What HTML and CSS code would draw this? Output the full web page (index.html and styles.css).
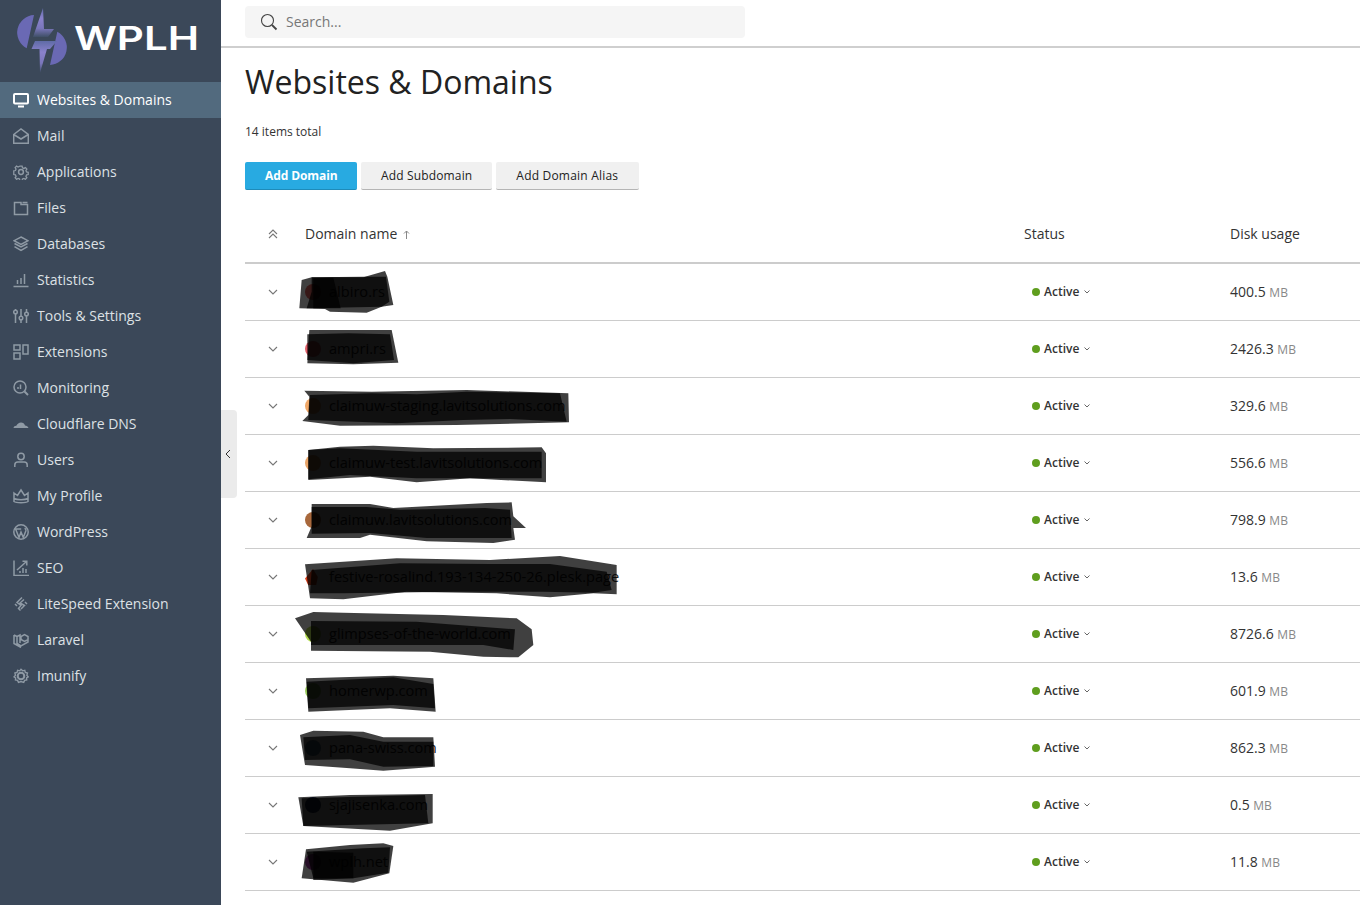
FILE: index.html
```html
<!DOCTYPE html>
<html lang="en">
<head>
<meta charset="utf-8">
<title>Websites &amp; Domains</title>
<link rel="stylesheet" href="styles.css">
</head>
<body>
<div class="app">
  <aside class="sidebar">
    <div class="logo">
      <svg width="221" height="82" viewBox="0 0 221 82">
        <defs>
          <linearGradient id="boltFill" x1="0" y1="0" x2="0" y2="1">
            <stop offset="0" stop-color="#5f6ba6"/>
            <stop offset=".35" stop-color="#8a82cc"/>
            <stop offset=".7" stop-color="#7a76bb"/>
            <stop offset="1" stop-color="#3f4f66"/>
          </linearGradient>
        </defs>
        <path d="M34 15A17.650 17.650 0 0 0 26.700 48.300Z" fill="#6a69b4"/>
        <path d="M57.300 31.700A17.650 17.650 0 0 1 50 65Z" fill="#6a69b4"/>
        <path d="M43 8L33 37H48L54 29H44Z" fill="url(#boltFill)"/>
        <path d="M35 41H57L50 49H47L40 73L39.500 49H31.500Z" fill="url(#boltFill)"/>
        <text x="74" y="50" class="logo-text" textLength="125" lengthAdjust="spacingAndGlyphs">WPLH</text>
      </svg>
    </div>
    <nav class="nav">
      <a class="nav-item active">
        <svg class="nav-icon" viewBox="0 0 16 16"><rect x="1" y="2" width="14" height="9.500" rx="1" class="solid"/><path d="M5 14.500h6" class="thick"/></svg>
        <span>Websites &amp; Domains</span>
      </a>
      <a class="nav-item">
        <svg class="nav-icon" viewBox="0 0 16 16"><path d="M.7 6.500L8 1l7.300 5.500v8.800H.7zM.7 6.500L8 11l7.300-4.500"/></svg>
        <span>Mail</span>
      </a>
      <a class="nav-item">
        <svg class="nav-icon" viewBox="0 0 16 16"><path d="M6.700 1h2.600l.4 2 1.700.8 1.800-1 1.700 1.800-1.100 1.700.7 1.700 2 .4v2.600l-2 .4-.7 1.700 1.100 1.700-1.700 1.800-1.800-1.100-1.700.7-.4 2H6.700l-.4-2-1.700-.7-1.800 1.100-1.700-1.800 1.100-1.700-.7-1.700-2-.4V6.700l2-.4.7-1.700-1.100-1.700 1.700-1.800 1.800 1 1.700-.8z" transform="translate(1.200 1.200) scale(.85)"/><circle cx="8" cy="8" r="2.400"/></svg>
        <span>Applications</span>
      </a>
      <a class="nav-item">
        <svg class="nav-icon" viewBox="0 0 16 16"><path d="M1.500 2.500v12h13v-10H8V2.500zM9.500 2.500h5"/></svg>
        <span>Files</span>
      </a>
      <a class="nav-item">
        <svg class="nav-icon" viewBox="0 0 16 16"><path d="M8 1l7 3.700-7 3.700-7-3.700zM1.500 7.500L8 11l6.500-3.500M1.500 10.700L8 14.500l6.500-3.800"/></svg>
        <span>Databases</span>
      </a>
      <a class="nav-item">
        <svg class="nav-icon" viewBox="0 0 16 16"><path d="M.5 14.500h15M4.500 12V8M8 12V6M11.500 12V2"/></svg>
        <span>Statistics</span>
      </a>
      <a class="nav-item">
        <svg class="nav-icon" viewBox="0 0 16 16"><path d="M2.500 1v1M2.500 6v9M8 1v7M8 12v3M13.500 1v3M13.500 8v7"/><circle cx="2.500" cy="4" r="1.800"/><circle cx="8" cy="10" r="1.800"/><circle cx="13.500" cy="6" r="1.800"/></svg>
        <span>Tools &amp; Settings</span>
      </a>
      <a class="nav-item">
        <svg class="nav-icon" viewBox="0 0 16 16"><rect x="1" y="1" width="6" height="5"/><rect x="1" y="9" width="6" height="6"/><rect x="10" y="1" width="5" height="9"/></svg>
        <span>Extensions</span>
      </a>
      <a class="nav-item">
        <svg class="nav-icon" viewBox="0 0 16 16"><circle cx="7" cy="7" r="6"/><path d="M11.500 11.500l3.500 3.500" class="thick"/><path d="M5 9V7M7.500 9V4.500"/></svg>
        <span>Monitoring</span>
      </a>
      <a class="nav-item">
        <svg class="nav-icon" viewBox="0 0 16 16"><path d="M.5 12c.3-1.500 1.500-2.300 2.800-2.200C4.200 7.800 6 6.500 8 6.500c2 0 3.500 1.300 4 3 1.600 0 3 1 3.500 2.500z" class="solid-soft"/></svg>
        <span>Cloudflare DNS</span>
      </a>
      <a class="nav-item">
        <svg class="nav-icon" viewBox="0 0 16 16"><circle cx="8" cy="4.500" r="3.200"/><path d="M1.800 15v-2c0-2 1.400-3 3-3h6.400c1.600 0 3 1 3 3v2"/></svg>
        <span>Users</span>
      </a>
      <a class="nav-item">
        <svg class="nav-icon" viewBox="0 0 16 16"><path d="M1 5l3.500 2.500L8 2l3.500 5.500L15 5v8.500c-2 1.500-12 1.500-14 0zM1 10.500c3 1.500 11 1.500 14 0"/></svg>
        <span>My Profile</span>
      </a>
      <a class="nav-item">
        <svg class="nav-icon" viewBox="0 0 16 16"><circle cx="8" cy="8" r="7.200"/><path d="M2.800 5.500L6 13.500 8 8l2.300 5.500 2.500-6.500c.5-1.500-.5-2.500-1.300-2.500M1.800 5h6.400"/></svg>
        <span>WordPress</span>
      </a>
      <a class="nav-item">
        <svg class="nav-icon" viewBox="0 0 16 16"><path d="M1 .5v15h15M4 10l9.500-8.500M9.500 1.200h4.300v4.300M7 13v-2M10 13V8M13 13V9"/></svg>
        <span>SEO</span>
      </a>
      <a class="nav-item">
        <svg class="nav-icon" viewBox="0 0 16 16"><path d="M9 1.500L4 6.500l4 3-2.500 3 2 2M11 3.500L7 7l4.500 2.500L8 13M2 8l2 2M14 8l-2-2"/></svg>
        <span>LiteSpeed Extension</span>
      </a>
      <a class="nav-item">
        <svg class="nav-icon" viewBox="0 0 16 16"><path d="M1 3l3 1.500v7L8 14l7-4V7.500L11.500 9.500 8 7.500V4.500L11.500 2.500 15 4.500v3M1 3v8.500L8 15.500M4 4.500L7 3v8"/></svg>
        <span>Laravel</span>
      </a>
      <a class="nav-item">
        <svg class="nav-icon" viewBox="0 0 16 16"><path d="M8 1l1.800 1.800 2.400-.6.600 2.400 2.400.7-.7 2.400L16 9.500l-1.800 1.200.2 2.300-2.400.4-1 2.200L8 14.700l-2.800.9-1-2.200-2.400-.4.200-2.300L.2 9.500l1.700-1.800-.7-2.400 2.400-.7.600-2.400 2.400.6z" transform="translate(.8 .3) scale(.9)"/><circle cx="8" cy="8" r="3.300" class="thick"/></svg>
        <span>Imunify</span>
      </a>
    </nav>
  </aside>

  <button class="collapse" aria-label="Collapse">
    <svg width="6" height="10" viewBox="0 0 6 10"><path d="M5 1L1 5l4 4"/></svg>
  </button>

  <main class="main">
    <header class="topbar">
      <div class="search">
        <svg width="18" height="18" viewBox="0 0 18 18"><circle cx="7.500" cy="7.500" r="6"/><path d="M12 12l4.500 4.500" class="search-handle"/></svg>
        <span>Search...</span>
      </div>
    </header>

    <section class="content">
      <h1>Websites &amp; Domains</h1>
      <p class="count">14 items total</p>
      <div class="actions">
        <button class="btn primary">Add Domain</button>
        <button class="btn">Add Subdomain</button>
        <button class="btn wide">Add Domain Alias</button>
      </div>

      <div class="table">
        <div class="row head">
          <div class="toggle"><svg width="10" height="10" viewBox="0 0 10 10"><path d="M1 5l4-4 4 4M1 9l4-4 4 4"/></svg></div>
          <div class="col-name">Domain name <svg class="sort" width="7" height="9" viewBox="0 0 7 9"><path d="M3.500 9V1M1 3.500L3.500 1 6 3.500"/></svg></div>
          <div>Status</div>
          <div>Disk usage</div>
        </div>

        <div class="row">
          <div class="toggle"><svg width="10" height="6" viewBox="0 0 10 6"><path d="M1 1l4 4 4-4"/></svg></div>
          <div class="domain"><i class="fav c1"></i><span>albiro.rs</span></div>
          <div class="status"><i class="dot"></i><span>Active</span><svg width="6" height="4" viewBox="0 0 6 4"><path d="M.5.5L3 3 5.500.5"/></svg></div>
          <div class="disk">400.5 <small>MB</small></div>
          <svg class="ink" viewBox="0 -3 1200 171"><polygon points="155,45 185,37 340,37 405,18 412,35 430,120 395,125 350,143 240,140 225,132 148,130"/><polygon points="185,37 340,35 408,35 418,110 395,125 170,130 185,80"/><polygon points="190,40 250,38 272,130 190,130"/></svg>
        </div>
        <div class="row">
          <div class="toggle"><svg width="10" height="6" viewBox="0 0 10 6"><path d="M1 1l4 4 4-4"/></svg></div>
          <div class="domain"><i class="fav c2"></i><span>ampri.rs</span></div>
          <div class="status"><i class="dot"></i><span>Active</span><svg width="6" height="4" viewBox="0 0 6 4"><path d="M.5.5L3 3 5.500.5"/></svg></div>
          <div class="disk">2426.3 <small>MB</small></div>
          <svg class="ink" viewBox="0 168 1200 171"><polygon points="178,195 425,195 445,293 310,298 172,295"/><polygon points="172,208 295,205 420,208 432,285 310,295 172,285"/></svg>
        </div>
        <div class="row">
          <div class="toggle"><svg width="10" height="6" viewBox="0 0 10 6"><path d="M1 1l4 4 4-4"/></svg></div>
          <div class="domain"><i class="fav c3"></i><span>claimuw-staging.lavitsolutions.com</span></div>
          <div class="status"><i class="dot"></i><span>Active</span><svg width="6" height="4" viewBox="0 0 6 4"><path d="M.5.5L3 3 5.500.5"/></svg></div>
          <div class="disk">329.6 <small>MB</small></div>
          <svg class="ink" viewBox="0 339 1200 171"><polygon points="163,377 365,380 650,375 955,385 957,472 620,480 270,482 157,468 175,450 178,395"/><polygon points="180,390 365,385 500,388 650,380 930,385 950,470 780,462 640,465 440,475 175,465"/></svg>
        </div>
        <div class="row">
          <div class="toggle"><svg width="10" height="6" viewBox="0 0 10 6"><path d="M1 1l4 4 4-4"/></svg></div>
          <div class="domain"><i class="fav c4"></i><span>claimuw-test.lavitsolutions.com</span></div>
          <div class="status"><i class="dot"></i><span>Active</span><svg width="6" height="4" viewBox="0 0 6 4"><path d="M.5.5L3 3 5.500.5"/></svg></div>
          <div class="disk">556.6 <small>MB</small></div>
          <svg class="ink" viewBox="0 510 1200 171"><polygon points="175,555 270,545 370,542 550,550 875,547 888,565 888,652 660,640 500,652 360,635 175,645"/><polygon points="175,555 270,550 500,560 875,560 875,640 600,640 500,640 300,630 175,643"/></svg>
        </div>
        <div class="row">
          <div class="toggle"><svg width="10" height="6" viewBox="0 0 10 6"><path d="M1 1l4 4 4-4"/></svg></div>
          <div class="domain"><i class="fav c5"></i><span>claimuw.lavitsolutions.com</span></div>
          <div class="status"><i class="dot"></i><span>Active</span><svg width="6" height="4" viewBox="0 0 6 4"><path d="M.5.5L3 3 5.500.5"/></svg></div>
          <div class="disk">798.9 <small>MB</small></div>
          <svg class="ink" viewBox="0 -3 1200 171"><polygon points="185,33 360,33 430,45 710,30 785,28 790,70 828,105 790,105 795,140 730,150 530,145 360,125 330,135 170,135 185,100"/><polygon points="185,42 350,42 450,50 705,45 780,50 785,135 530,135 360,120 185,122"/></svg>
        </div>
        <div class="row">
          <div class="toggle"><svg width="10" height="6" viewBox="0 0 10 6"><path d="M1 1l4 4 4-4"/></svg></div>
          <div class="domain"><i class="fav c6"></i><span>festive-rosalind.193-134-250-26.plesk.page</span></div>
          <div class="status"><i class="dot"></i><span>Active</span><svg width="6" height="4" viewBox="0 0 6 4"><path d="M.5.5L3 3 5.500.5"/></svg></div>
          <div class="disk">13.6 <small>MB</small></div>
          <svg class="ink" viewBox="0 -3 1200 171"><polygon points="165,43 440,25 720,30 930,18 1100,45 1100,133 1030,130 900,142 740,130 470,125 280,148 180,145"/><polygon points="185,60 450,40 720,42 900,42 1070,65 1085,120 1030,128 880,125 610,125 280,130 180,130"/></svg>
        </div>
        <div class="row">
          <div class="toggle"><svg width="10" height="6" viewBox="0 0 10 6"><path d="M1 1l4 4 4-4"/></svg></div>
          <div class="domain"><i class="fav c7"></i><span>glimpses-of-the-world.com</span></div>
          <div class="status"><i class="dot"></i><span>Active</span><svg width="6" height="4" viewBox="0 0 6 4"><path d="M.5.5L3 3 5.500.5"/></svg></div>
          <div class="disk">8726.6 <small>MB</small></div>
          <svg class="ink" viewBox="0 168 1200 171"><polygon points="135,205 190,186 280,188 580,195 800,205 845,238 850,285 805,322 700,320 540,305 183,302 183,275"/><polygon points="183,213 500,215 795,238 790,300 700,285 183,285"/></svg>
        </div>
        <div class="row">
          <div class="toggle"><svg width="10" height="6" viewBox="0 0 10 6"><path d="M1 1l4 4 4-4"/></svg></div>
          <div class="domain"><i class="fav c8"></i><span>homerwp.com</span></div>
          <div class="status"><i class="dot"></i><span>Active</span><svg width="6" height="4" viewBox="0 0 6 4"><path d="M.5.5L3 3 5.500.5"/></svg></div>
          <div class="disk">601.9 <small>MB</small></div>
          <svg class="ink" viewBox="0 339 1200 171"><polygon points="168,385 430,377 550,385 557,485 420,475 175,485"/><polygon points="170,395 430,382 550,402 555,475 430,465 175,475"/></svg>
        </div>
        <div class="row">
          <div class="toggle"><svg width="10" height="6" viewBox="0 0 10 6"><path d="M1 1l4 4 4-4"/></svg></div>
          <div class="domain"><i class="fav c9"></i><span>pana-swiss.com</span></div>
          <div class="status"><i class="dot"></i><span>Active</span><svg width="6" height="4" viewBox="0 0 6 4"><path d="M.5.5L3 3 5.500.5"/></svg></div>
          <div class="disk">862.3 <small>MB</small></div>
          <svg class="ink" viewBox="0 510 1200 171"><polygon points="150,555 190,542 340,545 400,562 550,562 555,650 400,662 300,655 165,645"/><polygon points="160,562 300,555 400,575 550,575 550,648 400,650 300,628 165,630"/></svg>
        </div>
        <div class="row">
          <div class="toggle"><svg width="10" height="6" viewBox="0 0 10 6"><path d="M1 1l4 4 4-4"/></svg></div>
          <div class="domain"><i class="fav c10"></i><span>sjajisenka.com</span></div>
          <div class="status"><i class="dot"></i><span>Active</span><svg width="6" height="4" viewBox="0 0 6 4"><path d="M.5.5L3 3 5.500.5"/></svg></div>
          <div class="disk">0.5 <small>MB</small></div>
          <svg class="ink" viewBox="0 681 1200 171"><polygon points="145,742 300,735 548,732 548,820 420,842 160,828"/><polygon points="155,745 525,735 535,820 160,828"/></svg>
        </div>
        <div class="row">
          <div class="toggle"><svg width="10" height="6" viewBox="0 0 10 6"><path d="M1 1l4 4 4-4"/></svg></div>
          <div class="domain"><i class="fav c11"></i><span>wplh.net</span></div>
          <div class="status"><i class="dot"></i><span>Active</span><svg width="6" height="4" viewBox="0 0 6 4"><path d="M.5.5L3 3 5.500.5"/></svg></div>
          <div class="disk">11.8 <small>MB</small></div>
          <svg class="ink" viewBox="0 852 1200 171"><polygon points="168,898 300,885 400,880 430,888 418,970 310,998 155,985"/><polygon points="170,905 340,895 420,892 415,968 310,985 190,985"/><polygon points="190,905 310,908 310,985 190,990"/></svg>
        </div>
      </div>
    </section>
  </main>
</div>
</body>
</html>
```

FILE: styles.css
```css
* { box-sizing: border-box; }

html, body {
  margin: 0;
  height: 100%;
  overflow: hidden;
  background: #fff;
}

body {
  font-family: "Open Sans", "Noto Sans", sans-serif;
  font-size: 14px;
  color: #222;
}

.app {
  display: flex;
  height: 905px;
  position: relative;
}

/* Sidebar */
.sidebar {
  width: 221px;
  flex: none;
  background: #3b4859;
}

.logo { height: 82px; }
.logo svg { display: block; }

.logo-text {
  font-family: Inter, "Liberation Sans", sans-serif;
  font-weight: 600;
  font-size: 32px;
  fill: #fff;
}

.nav { display: flex; flex-direction: column; }

.nav-item {
  display: flex;
  align-items: center;
  gap: 8px;
  height: 36px;
  padding-left: 13px;
  color: #dde1e5;
  font-size: 14px;
}

.nav-item span { margin-bottom: 2px; }

.nav-item.active {
  background: #526a7e;
  color: #fff;
}

.nav-icon {
  width: 16px;
  height: 16px;
  flex: none;
  fill: none;
  stroke: #8f9aa5;
  stroke-width: 1.500;
}

.nav-icon .thick { stroke-width: 2; }
.nav-icon .solid-soft { fill: #8f9aa5; stroke: none; }
.active .nav-icon { stroke: #fff; }
.active .nav-icon .solid { stroke-width: 2; }

/* Collapse handle */
.collapse {
  position: absolute;
  left: 221px;
  top: 410px;
  width: 16px;
  height: 88px;
  padding: 0 2px 0 0;
  border: 0;
  border-radius: 0 4px 4px 0;
  background: #ebebeb;
  display: flex;
  align-items: center;
  justify-content: center;
}

.collapse svg { fill: none; stroke: #333; stroke-width: 1; }

/* Main */
.main {
  flex: 1;
  min-width: 0;
  display: flex;
  flex-direction: column;
}

.topbar {
  height: 48px;
  padding: 6px 24px 0;
  border-bottom: 2px solid #cfcfcf;
  flex: none;
}

.search {
  display: flex;
  align-items: center;
  gap: 8px;
  width: 500px;
  height: 32px;
  padding-left: 15px;
  background: #f5f5f5;
  border-radius: 4px;
  color: #777;
  font-size: 14px;
}

.search span { margin-bottom: 2px; }
.search svg { fill: none; stroke: #444; stroke-width: 1.100; }
.search .search-handle { stroke-width: 1.800; }

.content { padding: 12px 0 0 24px; }

h1 {
  margin: 0;
  font-size: 32px;
  line-height: 44px;
  font-weight: 400;
  color: #222;
}

.count {
  margin: 19px 0 0;
  font-size: 12px;
  line-height: 17px;
  color: #333;
}

.actions {
  display: flex;
  gap: 4px;
  margin-top: 22px;
}

.btn {
  height: 28px;
  padding: 0 19.500px;
  border: 0;
  border-bottom: 1px solid #b5b5b5;
  border-radius: 2px;
  background: #f0f0f0;
  color: #222;
  font: 400 12px/26px "Open Sans", sans-serif;
  letter-spacing: .15px;
}

.btn.wide {
  padding: 0 20.500px;
  letter-spacing: .2px;
}

.btn.primary {
  padding: 0 20px;
  background: #28aae1;
  border-bottom-color: #1e8bb9;
  color: #fff;
  font-weight: 700;
  letter-spacing: -.1px;
}

/* Table */
.table { margin-top: 15px; }

.row {
  display: grid;
  grid-template-columns: 60px 719px 206px 1fr;
  align-items: center;
  height: 57px;
  border-bottom: 1px solid #cccccc;
  position: relative;
}

.row.head {
  height: 59px;
  border-bottom: 2px solid #cccccc;
  color: #333;
}

.toggle {
  display: flex;
  justify-content: center;
  padding-right: 4px;
}

.toggle svg { fill: none; stroke: #777; stroke-width: 1.100; }

.sort { margin-left: 2px; fill: none; stroke: #888; stroke-width: 1; }

.domain {
  display: flex;
  align-items: center;
  gap: 8px;
  color: #222;
  font-size: 14.600px;
}

.domain span { margin-bottom: 2px; }

.fav {
  width: 16px;
  height: 16px;
  flex: none;
  border-radius: 50%;
  background: #888;
}

.c1 { background: #d8605c; }
.c2 { background: #e0606a; }
.c3 { background: #f0a868; }
.c4 { background: #e8a468; }
.c5 { background: #a8683c; }
.c6 {
  background: #d8401c;
  clip-path: polygon(50% 0, 80% 50%, 70% 100%, 20% 100%, 0 60%);
  border-radius: 0;
}
.c7 { background: #b4dc50; }
.c8 { background: #9ccc60; }
.c9 { background: #5c80a0; }
.c10 { background: #203060; }
.c11 { background: #a040a0; }

.status {
  display: flex;
  align-items: center;
  padding-left: 8px;
  font-size: 12px;
  font-weight: 600;
  color: #333;
}

.status span { margin-bottom: 2px; }

.dot {
  width: 8px;
  height: 8px;
  margin-right: 4px;
  border-radius: 50%;
  background: #5f9e1e;
}

.status svg {
  margin-left: 5px;
  fill: none;
  stroke: #666;
  stroke-width: 1;
}

.disk { color: #333; margin-bottom: 2px; }
.disk small { font-size: 12px; color: #888; }

/* Marker scribbles laid over the domain names */
.ink {
  position: absolute;
  left: 5px;
  top: 0;
  width: 400px;
  height: 57px;
  overflow: visible;
  pointer-events: none;
}

.ink polygon { fill: #000; fill-opacity: .75; }
```
